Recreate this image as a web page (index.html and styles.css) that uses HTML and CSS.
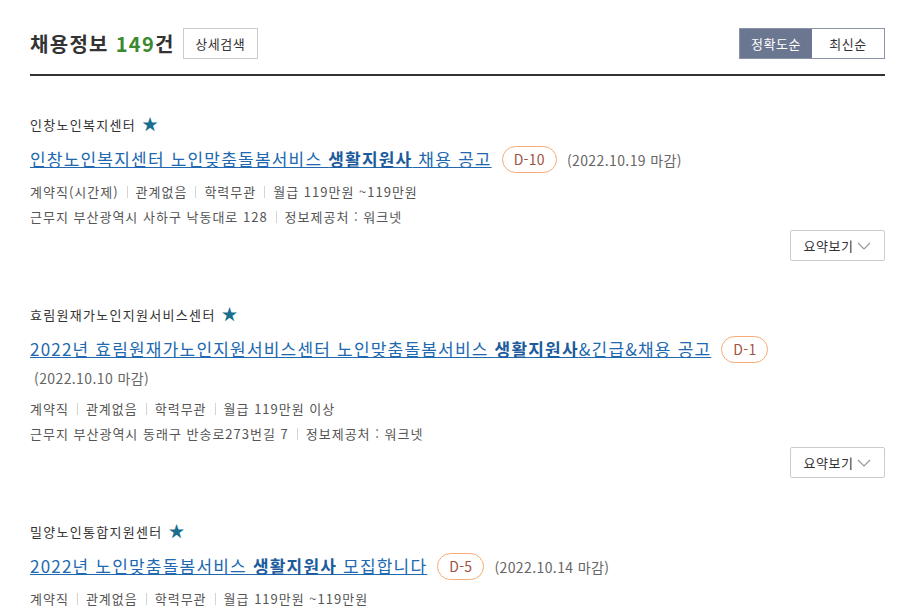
FILE: index.html
```html
<!DOCTYPE html>
<html lang="ko">
  <head>
    <meta charset="UTF-8" />
    <title>채용정보</title>
    <link rel="stylesheet" href="styles.css">
  </head>
  <body>
    <div class="wrap">
      <!-- 상단 헤더 -->
      <header class="list-head">
        <h2 class="count-title">채용정보 <span class="num">149</span>건</h2>
        <button class="btn-detail">상세검색</button>
        <div class="sort">
          <button class="active">정확도순</button>
          <button>최신순</button>
        </div>
      </header>

      <!-- 채용 목록 -->
      <div class="item">
        <div class="company">인창노인복지센터 <span class="star">★</span></div>
        <div class="title">
          <a href="#">인창노인복지센터 노인맞춤돌봄서비스 <b>생활지원사</b> 채용 공고</a>
          <span class="dday">D-10</span>
          <span class="deadline">(2022.10.19 마감)</span>
        </div>
        <ul class="meta">
          <li>계약직(시간제)</li>
          <li>관계없음</li>
          <li>학력무관</li>
          <li>월급 119만원 ~119만원</li>
        </ul>
        <ul class="meta">
          <li>근무지 부산광역시 사하구 낙동대로 128</li>
          <li>정보제공처 : 워크넷</li>
        </ul>
        <div class="more">
          <button>요약보기 <svg width="14" height="8" viewBox="0 0 14 8"><path d="M1 1l6 6 6-6" fill="none" stroke="#999" stroke-width="1.2"/></svg></button>
        </div>
      </div>

      <div class="item">
        <div class="company">효림원재가노인지원서비스센터 <span class="star">★</span></div>
        <div class="title">
          <a href="#">2022년 효림원재가노인지원서비스센터 노인맞춤돌봄서비스 <b>생활지원사</b>&amp;긴급&amp;채용 공고</a>
          <span class="dday">D-1</span>
          <span class="deadline">(2022.10.10 마감)</span>
        </div>
        <ul class="meta">
          <li>계약직</li>
          <li>관계없음</li>
          <li>학력무관</li>
          <li>월급 119만원 이상</li>
        </ul>
        <ul class="meta">
          <li>근무지 부산광역시 동래구 반송로273번길 7</li>
          <li>정보제공처 : 워크넷</li>
        </ul>
        <div class="more">
          <button>요약보기 <svg width="14" height="8" viewBox="0 0 14 8"><path d="M1 1l6 6 6-6" fill="none" stroke="#999" stroke-width="1.2"/></svg></button>
        </div>
      </div>

      <div class="item">
        <div class="company">밀양노인통합지원센터 <span class="star">★</span></div>
        <div class="title">
          <a href="#">2022년 노인맞춤돌봄서비스 <b>생활지원사</b> 모집합니다</a>
          <span class="dday">D-5</span>
          <span class="deadline">(2022.10.14 마감)</span>
        </div>
        <ul class="meta">
          <li>계약직</li>
          <li>관계없음</li>
          <li>학력무관</li>
          <li>월급 119만원 ~119만원</li>
        </ul>
      </div>
    </div>
  </body>
</html>
```
FILE: styles.css
```css
body {
  margin: 0;
  font-family: "Noto Sans CJK KR", "Noto Sans", sans-serif;
  color: #333;
  background-color: #fff;
}

.wrap {
  width: 855px;
  padding: 28px 0 0 30px;
}

button {
  font-family: inherit;
  cursor: pointer;
}

.list-head {
  display: flex;
  align-items: center;
  padding-bottom: 15px;
  border-bottom: 2px solid #333;
}

.count-title {
  margin: 0;
  font-size: 20px;
  font-weight: bold;
  letter-spacing: 1.3px;
  color: #333;
}

.count-title .num {
  color: #3b8a2f;
}

.btn-detail {
  margin-left: 8px;
  height: 31px;
  width: 75px;
  padding: 0;
  font-size: 13px;
  letter-spacing: 0.5px;
  color: #333;
  background: #fff;
  border: 1px solid #ccc;
}

.sort {
  display: flex;
  margin-left: auto;
  border: 1px solid #8a94a9;
}

.sort button {
  width: 72px;
  height: 29px;
  padding: 0;
  border: none;
  font-size: 13px;
  letter-spacing: 0.5px;
  color: #333;
  background: #fff;
}

.sort button.active {
  background: #6b7791;
  color: #fff;
}

.item {
  padding-top: 37px;
}

.item + .item {
  padding-top: 42px;
}

.company {
  font-size: 13px;
  line-height: 20px;
  letter-spacing: 1.3px;
  margin-bottom: 10px;
  color: #333;
}

.star {
  color: #1a6e8e;
  font-size: 16px;
  margin-left: 1px;
}

.title {
  font-size: 17px;
  line-height: 27px;
  letter-spacing: 1.2px;
  margin-bottom: 6px;
}

.title a {
  color: #2068b0;
  text-decoration: underline;
}

.title a b {
  color: #1c5c9c;
}

.dday {
  display: inline-block;
  margin-left: 4px;
  padding: 0 11px;
  height: 25px;
  line-height: 25px;
  font-size: 14px;
  letter-spacing: 0.3px;
  color: #a05440;
  border: 1px solid #f6aa74;
  border-radius: 14px;
  vertical-align: 1px;
}

.deadline {
  display: inline-block;
  white-space: nowrap;
  margin-left: 4px;
  font-size: 14px;
  line-height: 24px;
  letter-spacing: 0.4px;
  color: #666;
}

.meta {
  display: flex;
  list-style: none;
  margin: 0;
  padding: 0;
  font-size: 13px;
  line-height: 25px;
  letter-spacing: 1px;
  color: #555;
}

.meta li + li::before {
  content: "";
  display: inline-block;
  width: 1px;
  height: 12px;
  background: #d4d4d4;
  margin: 0 8px;
  vertical-align: -1px;
}

.more {
  display: flex;
  justify-content: flex-end;
  margin-top: 1px;
}

.more button {
  display: flex;
  align-items: center;
  gap: 4px;
  width: 95px;
  height: 31px;
  justify-content: center;
  font-size: 13px;
  letter-spacing: 0.5px;
  color: #333;
  background: #fff;
  border: 1px solid #ccc;
  border-radius: 2px;
}
```
